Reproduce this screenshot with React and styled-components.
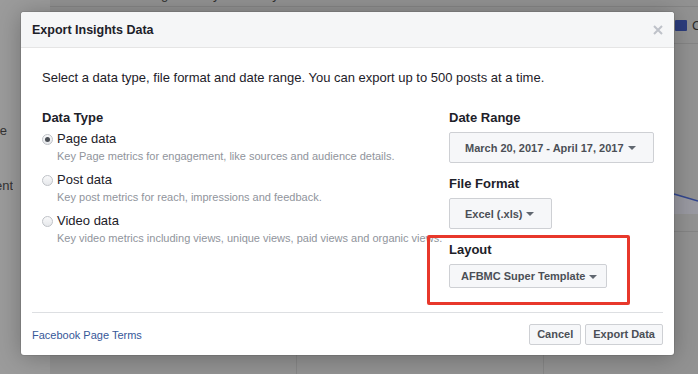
import React from 'react';
import styled, { createGlobalStyle } from 'styled-components';

const Global = createGlobalStyle`
  html, body { margin: 0; padding: 0; }
  body {
    background: #929292;
    font-family: "Liberation Sans", Arial, Helvetica, sans-serif;
    -webkit-font-smoothing: antialiased;
  }
`;

const Page = styled.div`
  position: relative;
  width: 698px;
  height: 374px;
  overflow: hidden;
  display: flex;
  background: #929292;
`;

/* ---------- dimmed page behind the dialog ---------- */
const SideNav = styled.div`
  width: 50px;
  flex: none;
  background: #9b9b9b;
  display: flex;
  flex-direction: column;
  padding-top: 122px;
  gap: 37px;
  box-sizing: border-box;
`;

const SideLabel = styled.div`
  width: ${p => p.$w}px;
  overflow: hidden;
  direction: rtl;
  white-space: nowrap;
  font-size: 13px;
  line-height: 18px;
  color: #333;
`;

const Main = styled.div`
  flex: 1;
  display: flex;
  flex-direction: column;
  min-width: 0;
`;

const TopLine = styled.div`
  height: 20px;
  padding-left: 95px;
  margin-top: -14px;
  font-size: 13px;
  line-height: 18px;
  color: #2f2f2f;
  white-space: nowrap;
  border-bottom: 1px solid #858585;
`;

const Legend = styled.div`
  height: 36px;
  display: flex;
  align-items: center;
  gap: 5px;
  padding-left: 625px;
  border-bottom: 1px solid #858585;
  font-size: 13px;
  color: #2a2a2a;
  white-space: nowrap;
`;

const Swatch = styled.span`
  width: 12px;
  height: 11px;
  background: #2c3d7e;
  border-radius: 1px;
  flex: none;
`;

const Chart = styled.div`
  height: 187px;
  border-bottom: 1px solid #858585;
  svg { display: block; }
`;

const Stats = styled.div`
  flex: 1;
  display: grid;
  grid-template-columns: 246px 247px 1fr;
  & > div + div { border-left: 1px solid #868686; }
`;

/* ---------- dialog ---------- */
const Dialog = styled.div`
  position: absolute;
  left: 21px;
  top: 12px;
  width: 653px;
  height: 343px;
  background: #fff;
  border-radius: 3px;
  box-shadow: 0 2px 24px rgba(0, 0, 0, 0.28), 0 0 0 1px rgba(0, 0, 0, 0.08);
  display: flex;
  flex-direction: column;
  overflow: hidden;
`;

const Header = styled.div`
  height: 35px;
  flex: none;
  background: #f5f6f7;
  border-bottom: 1px solid #e5e5e5;
  display: flex;
  align-items: center;
  justify-content: space-between;
  padding: 0 11px;
`;

const Title = styled.h2`
  margin: 0;
  font-size: 12.5px;
  font-weight: bold;
  color: #1d2129;
  line-height: 18px;
`;

const Close = styled.button`
  border: 0;
  background: none;
  padding: 0;
  width: 10px;
  height: 10px;
  display: flex;
  svg { display: block; }
`;

const Body = styled.div`
  flex: 1;
  padding: 21px 20px 0 21px;
`;

const Intro = styled.p`
  margin: 0;
  font-size: 13px;
  line-height: 18px;
  color: #1d2129;
  white-space: nowrap;
`;

const Columns = styled.div`
  margin-top: 22px;
  display: grid;
  grid-template-columns: 1fr 205px;
`;

const Col = styled.div`
  display: flex;
  flex-direction: column;
  align-items: flex-start;
  min-width: 0;
`;

const SectionTitle = styled.div`
  font-size: 13px;
  font-weight: bold;
  line-height: 18px;
  color: #1d2129;
  margin-top: ${p => p.$top || 0}px;
`;

const Option = styled.label`
  display: flex;
  flex-direction: column;
  margin-top: ${p => (p.$first ? 3 : 7)}px;
  white-space: nowrap;
`;

const OptionRow = styled.span`
  display: flex;
  align-items: center;
  gap: 4px;
  font-size: 13px;
  line-height: 18px;
  color: #1d2129;
`;

const Radio = styled.span`
  width: 11px;
  height: 11px;
  box-sizing: border-box;
  border-radius: 50%;
  border: 1px solid #bfc2c7;
  background: linear-gradient(#f9f9fa, #e6e8eb);
  display: flex;
  align-items: center;
  justify-content: center;
  flex: none;
  &::after {
    content: '';
    width: 5px;
    height: 5px;
    border-radius: 50%;
    background: ${p => (p.$checked ? '#4b4f56' : 'transparent')};
  }
`;

const Desc = styled.span`
  padding-left: 15px;
  font-size: 11px;
  line-height: 16px;
  color: #90949c;
`;

const Select = styled.button`
  margin-top: 5px;
  height: ${p => (p.$small ? 24 : 31)}px;
  padding: ${p => (p.$small ? '0 9px 0 11px' : '0 17px 0 15px')};
  box-sizing: border-box;
  display: flex;
  align-items: center;
  gap: 4px;
  background: #f6f7f9;
  border: 1px solid #ced0d4;
  border-radius: 2px;
  font-family: inherit;
  font-size: 11px;
  font-weight: bold;
  color: #4b4f56;
  white-space: nowrap;
`;

const Caret = styled.span`
  width: 0;
  height: 0;
  border-left: 4px solid transparent;
  border-right: 4px solid transparent;
  border-top: 4px solid #606770;
  margin-top: 1px;
`;

const Footer = styled.div`
  flex: none;
  margin: 0 11px;
  padding: 11px 0 10px;
  border-top: 1px solid #dddfe2;
  display: flex;
  align-items: center;
  justify-content: space-between;
`;

const TermsLink = styled.a`
  font-size: 11px;
  color: #365899;
  text-decoration: none;
`;

const Actions = styled.div`
  display: flex;
  gap: 4px;
`;

const Button = styled.button`
  height: 21px;
  padding: 0 7px;
  background: #f6f7f9;
  border: 1px solid #ced0d4;
  border-radius: 2px;
  font-family: inherit;
  font-size: 11px;
  font-weight: bold;
  color: #4b4f56;
  line-height: 19px;
`;

const Highlight = styled.div`
  position: absolute;
  left: 427px;
  top: 235px;
  width: 203px;
  height: 70px;
  box-sizing: border-box;
  border: 3px solid #e8382b;
  border-radius: 2px;
  pointer-events: none;
`;

const options = [
  { label: 'Page data', desc: 'Key Page metrics for engagement, like sources and audience details.', checked: true },
  { label: 'Post data', desc: 'Key post metrics for reach, impressions and feedback.' },
  { label: 'Video data', desc: 'Key video metrics including views, unique views, paid views and organic views.' },
];

export default function App() {
  return (
    <>
      <Global />
      <Page>
        <SideNav>
          <SideLabel $w={7}>Page</SideLabel>
          <SideLabel $w={13}>Engagement</SideLabel>
        </SideNav>
        <Main>
          <TopLine>Page Activity Summary</TopLine>
          <Legend>
            <Swatch />
            <span>Clicks</span>
          </Legend>
          <Chart>
            <svg width="648" height="187" viewBox="0 0 648 187">
              <polygon points="560,122 624,150 648,157 648,170 560,170" fill="#9a9aa2" />
              <polyline points="560,122 624,150 648,157" fill="none" stroke="#33478f" strokeWidth="1.5" />
            </svg>
          </Chart>
          <Stats>
            <div />
            <div />
            <div />
          </Stats>
        </Main>

        <Dialog role="dialog">
          <Header>
            <Title>Export Insights Data</Title>
            <Close aria-label="Close">
              <svg width="10" height="10" viewBox="0 0 10 10">
                <path d="M1 1 L9 9 M9 1 L1 9" stroke="#bec2c9" strokeWidth="2" />
              </svg>
            </Close>
          </Header>
          <Body>
            <Intro>Select a data type, file format and date range. You can export up to 500 posts at a time.</Intro>
            <Columns>
              <Col>
                <SectionTitle>Data Type</SectionTitle>
                {options.map((o, i) => (
                  <Option key={o.label} $first={i === 0}>
                    <OptionRow>
                      <Radio $checked={o.checked} />
                      {o.label}
                    </OptionRow>
                    <Desc>{o.desc}</Desc>
                  </Option>
                ))}
              </Col>
              <Col>
                <SectionTitle>Date Range</SectionTitle>
                <Select>March 20, 2017 - April 17, 2017 <Caret /></Select>
                <SectionTitle $top={12}>File Format</SectionTitle>
                <Select>Excel (.xls) <Caret /></Select>
                <SectionTitle $top={12}>Layout</SectionTitle>
                <Select $small>AFBMC Super Template <Caret /></Select>
              </Col>
            </Columns>
          </Body>
          <Footer>
            <TermsLink href="#">Facebook Page Terms</TermsLink>
            <Actions>
              <Button>Cancel</Button>
              <Button>Export Data</Button>
            </Actions>
          </Footer>
        </Dialog>
        <Highlight />
      </Page>
    </>
  );
}
